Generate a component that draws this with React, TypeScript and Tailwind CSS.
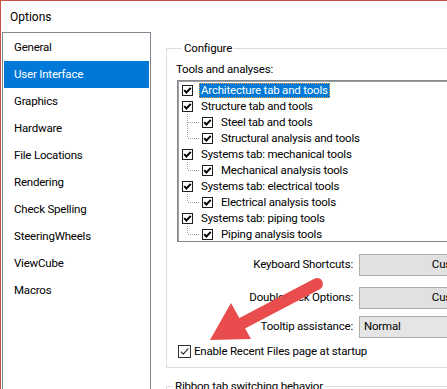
import React from "react";

type TreeItem = { label: string; level: 0 | 1; last?: boolean; selected?: boolean };

const navItems = [
  "General",
  "User Interface",
  "Graphics",
  "Hardware",
  "File Locations",
  "Rendering",
  "Check Spelling",
  "SteeringWheels",
  "ViewCube",
  "Macros",
];

const tree: TreeItem[] = [
  { label: "Architecture tab and tools", level: 0, selected: true },
  { label: "Structure tab and tools", level: 0 },
  { label: "Steel tab and tools", level: 1 },
  { label: "Structural analysis and tools", level: 1, last: true },
  { label: "Systems tab: mechanical tools", level: 0 },
  { label: "Mechanical analysis tools", level: 1, last: true },
  { label: "Systems tab: electrical tools", level: 0 },
  { label: "Electrical analysis tools", level: 1, last: true },
  { label: "Systems tab: piping tools", level: 0 },
  { label: "Piping analysis tools", level: 1, last: true },
];

const TreeCheck = () => (
  <div className="w-[11px] h-[11px] shrink-0 border border-[#1e1e1e] bg-white">
    <svg width="9" height="9" viewBox="0 0 9 9" className="block">
      <path d="M1.2 4.2 L3.4 6.5 L7.8 1.8" fill="none" stroke="#000" strokeWidth="1.9" />
    </svg>
  </div>
);

const Connector = ({ last }: { last?: boolean }) => (
  <svg width="23" height="16" viewBox="0 0 23 16" className="block shrink-0" shapeRendering="crispEdges">
    <line x1="8.5" y1="0" x2="8.5" y2={last ? 8 : 16} stroke="#a0a0a0" strokeDasharray="1 1" />
    <line x1="9" y1="8.5" x2="21" y2="8.5" stroke="#a0a0a0" strokeDasharray="1 1" />
  </svg>
);

const TreeRow = ({ item }: { item: TreeItem }) => (
  <div className="flex items-center h-[16px] whitespace-nowrap">
    {item.level === 0 ? (
      <div className="pl-[3px]">
        <TreeCheck />
      </div>
    ) : (
      <>
        <Connector last={item.last} />
        <TreeCheck />
      </>
    )}
    {item.selected ? (
      <span className="ml-[6px] px-[2px] h-[15px] leading-[15px] bg-[#0078d7] text-white outline outline-1 outline-dotted outline-[#f0a040] -outline-offset-1">
        {item.label}
      </span>
    ) : (
      <span className="ml-[8px] leading-[16px]">{item.label}</span>
    )}
  </div>
);

export default function App() {
  return (
    <div className="relative w-[447px] h-[389px] overflow-hidden bg-white border-t border-l border-[#c9514b] flex flex-col font-['Roboto',sans-serif] text-[11.5px] tracking-[-0.2px] text-black">
      <div className="h-[31px] shrink-0 flex items-center pl-[9px] text-[12px] tracking-normal">Options</div>
      <div className="flex flex-1 min-h-0">
        <div className="ml-[1px] w-[149px] shrink-0 border border-b-0 border-[#828790] pt-[1px] px-[1px]">
          {navItems.map((n) => (
            <div
              key={n}
              className={
                n === "User Interface"
                  ? "h-[27px] flex items-center pl-[10px] pt-[1px] bg-[#0078d7] text-white"
                  : "h-[27px] flex items-center pl-[10px] pt-[1px]"
              }
            >
              {n}
            </div>
          ))}
        </div>

        <div className="w-[330px] shrink-0 pl-[15px]">
          <fieldset className="mt-[8px] border border-[#dcdcdc] pl-[9px] pb-[8px]">
            <legend className="ml-[6px] px-[2px] leading-[16px]">Configure</legend>
            <div className="pt-[5px] leading-[16px]">Tools and analyses:</div>
            <div className="ml-[1px] mt-[3px] h-[162px] border border-[#828790] shadow-[inset_1px_1px_0_#a0a0a0] pt-[1px] pl-[1px]">
              {tree.map((t) => (
                <TreeRow key={t.label} item={t} />
              ))}
            </div>

            <div className="mt-[12px] grid grid-cols-[177px_207px] gap-x-[6px] items-center">
              <div className="text-right">Keyboard Shortcuts:</div>
              <div className="h-[22px] border border-[#adadad] bg-[#e1e1e1] flex items-center justify-center">
                Customize...
              </div>
            </div>
            <div className="mt-[11px] grid grid-cols-[177px_207px] gap-x-[6px] items-center">
              <div className="text-right">Double-click Options:</div>
              <div className="h-[22px] border border-[#adadad] bg-[#e1e1e1] flex items-center justify-center">
                Customize...
              </div>
            </div>
            <div className="mt-[7px] grid grid-cols-[177px_207px] gap-x-[6px] items-center">
              <div className="text-right">Tooltip assistance:</div>
              <div className="h-[22px] border border-[#acacac] bg-[#e5e5e5] flex items-center pl-[4px]">
                Normal
              </div>
            </div>

            <div className="mt-[5px] h-[16px] flex items-center">
              <div className="ml-[2px] w-[13px] h-[13px] border border-[#333333] bg-white">
                <svg width="11" height="11" viewBox="0 0 11 11" className="block">
                  <path d="M1.8 5.6 L4.2 8.2 L9.4 2.4" fill="none" stroke="#333" strokeWidth="1.2" />
                </svg>
              </div>
              <span className="ml-[3px] leading-[16px]">Enable Recent Files page at startup</span>
            </div>
          </fieldset>

          <fieldset className="mt-[10px] border border-[#dcdcdc] h-[40px]">
            <legend className="ml-[6px] px-[2px] leading-[16px]">Ribbon tab switching behavior</legend>
          </fieldset>
        </div>
      </div>

      <svg className="absolute left-0 top-0 pointer-events-none" width="447" height="389" viewBox="0 0 447 389">
        <line x1="316" y1="283" x2="236" y2="325" stroke="#e84c4c" strokeWidth="12" strokeLinecap="round" />
        <polygon points="209,339 230,302 250,338" fill="#e84c4c" />
      </svg>
    </div>
  );
}
